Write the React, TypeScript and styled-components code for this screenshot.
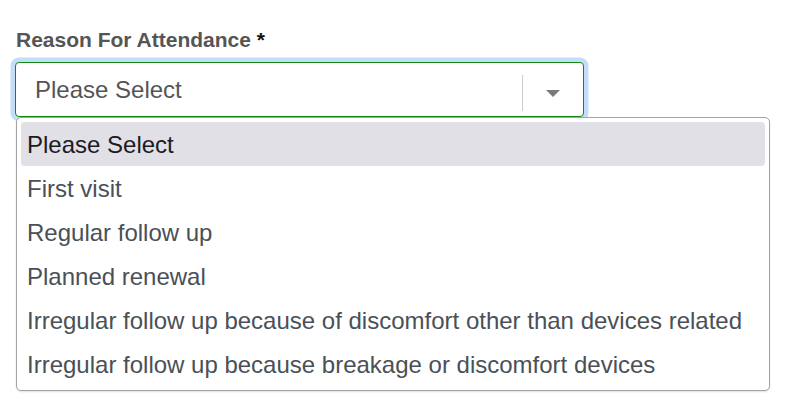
import React from "react";
import styled, { createGlobalStyle } from "styled-components";

const GlobalStyle = createGlobalStyle`
  html, body { margin: 0; padding: 0; background: #ffffff; }
  body { font-family: "Liberation Sans", Arial, sans-serif; }
`;

const Page = styled.div`
  min-height: 406px;
  box-sizing: border-box;
  padding: 28px 0 0 15px;
`;

const Field = styled.div`
  display: flex;
  flex-direction: column;
  width: 569px;
`;

const Label = styled.label`
  font-size: 21px;
  line-height: 23px;
  font-weight: 700;
  color: #555555;
  margin-bottom: 11px;
  padding-left: 1px;
`;

const Required = styled.span`
  color: #111111;
`;

const SelectWrap = styled.div`
  position: relative;
`;

const Control = styled.div`
  display: flex;
  height: 55px;
  box-sizing: border-box;
  border: 1px solid #138a13;
  border-radius: 4px;
  box-shadow: 0 0 0 4.5px #c4ddf8;
  background: #ffffff;
`;

const Value = styled.div`
  flex: 1;
  display: flex;
  align-items: center;
  padding-left: 19px;
  font-size: 24px;
  color: #555555;
`;

const Indicators = styled.div`
  display: flex;
  align-items: center;
  padding: 12px 0 5px;
`;

const Separator = styled.span`
  width: 1px;
  align-self: stretch;
  background: #cccccc;
`;

const CaretBox = styled.div`
  width: 60px;
  display: flex;
  justify-content: center;
  align-items: center;
`;

const Caret = styled.span`
  width: 0;
  height: 0;
  border-left: 7px solid transparent;
  border-right: 7px solid transparent;
  border-top: 7px solid #7a7a7a;
  margin-left: -1px;
`;

const Menu = styled.ul`
  position: absolute;
  top: 100%;
  left: 1px;
  width: 754px;
  box-sizing: border-box;
  margin: 0;
  padding: 4px;
  list-style: none;
  background: #ffffff;
  border: 1px solid #a3a3a3;
  border-radius: 5px;
  box-shadow: 0 1px 2px rgba(0, 0, 0, 0.12);
  z-index: 2;
`;

const Option = styled.li<{ $active?: boolean }>`
  height: 44px;
  box-sizing: border-box;
  display: flex;
  align-items: center;
  padding: 2px 6px 0;
  border-radius: 4px;
  font-size: 24px;
  white-space: nowrap;
  color: ${(p) => (p.$active ? "#1b1b1f" : "#4a5057")};
  background: ${(p) => (p.$active ? "#e1e0e6" : "transparent")};
`;

const options = [
  "Please Select",
  "First visit",
  "Regular follow up",
  "Planned renewal",
  "Irregular follow up because of discomfort other than devices related",
  "Irregular follow up because breakage or discomfort devices",
];

export default function App() {
  return (
    <>
      <GlobalStyle />
      <Page>
        <Field>
          <Label>
            Reason For Attendance <Required>*</Required>
          </Label>
          <SelectWrap>
            <Control>
              <Value>Please Select</Value>
              <Indicators>
                <Separator />
                <CaretBox>
                  <Caret />
                </CaretBox>
              </Indicators>
            </Control>
            <Menu>
              {options.map((o, i) => (
                <Option key={o} $active={i === 0}>
                  {o}
                </Option>
              ))}
            </Menu>
          </SelectWrap>
        </Field>
      </Page>
    </>
  );
}
